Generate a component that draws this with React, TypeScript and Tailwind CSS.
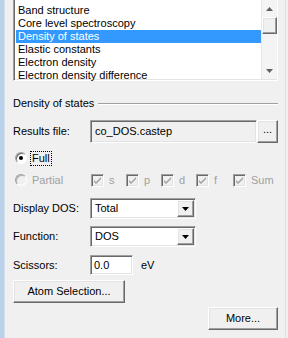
import React from 'react';

const items = [
  'Band structure',
  'Core level spectroscopy',
  'Density of states',
  'Elastic constants',
  'Electron density',
  'Electron density difference',
];

const sunken =
  'border border-t-[#a0a0a0] border-l-[#a0a0a0] border-b-white border-r-white shadow-[inset_1px_1px_0_#696969,inset_-1px_-1px_0_#e3e3e3]';
const raised =
  'border border-t-white border-l-white border-b-[#696969] border-r-[#696969] shadow-[inset_-1px_-1px_0_#a0a0a0,inset_1px_1px_0_#e3e3e3] bg-[#f0f0f0]';

function Arrow({ up, color = '#000' }: { up?: boolean; color?: string }) {
  return (
    <svg width="7" height="4" viewBox="0 0 7 4">
      <path d={up ? 'M3.5 0L7 4H0z' : 'M0 0h7L3.5 4z'} fill={color} />
    </svg>
  );
}

function DisabledCheck({ label, width }: { label: string; width: string }) {
  return (
    <div className={`flex items-center gap-[5px] text-[#a0a0a0] ${width}`}>
      <div className={`w-[13px] h-[13px] shrink-0 bg-[#f0f0f0] flex items-center justify-center ${sunken}`}>
        <svg width="7" height="7" viewBox="0 0 7 7">
          <path d="M0 3l2 2 5-5v2L2 7 0 5z" fill="#a0a0a0" />
        </svg>
      </div>
      <span>{label}</span>
    </div>
  );
}

function Combo({ value }: { value: string }) {
  return (
    <div className={`w-[106px] h-[21px] bg-white flex items-center ${sunken}`}>
      <span className="flex-1 pl-[4px]">{value}</span>
      <div className={`w-[17px] h-[17px] mr-[1px] flex items-center justify-center ${raised}`}>
        <Arrow />
      </div>
    </div>
  );
}

export default function App() {
  return (
    <div
      className="w-[288px] h-[338px] bg-[#f0f0f0] flex text-[11px] leading-[13px] text-black overflow-hidden"
      style={{ fontFamily: '"Liberation Sans", Arial, sans-serif' }}
    >
      <div className="w-[4px] bg-[#b9d1ea]" />
      <div className="w-[1px] bg-[#d5dfe9]" />
      <div className="flex-1 flex flex-col pl-[8px] pr-[7px]">
        {/* Listbox */}
        <div className="h-[81px] bg-white flex border-l border-b border-l-[#a0a0a0] border-b-white border-r border-r-white shadow-[inset_1px_0_0_#696969,inset_0_-1px_0_#e3e3e3]">
          <div className="flex-1 pt-[4px] pl-[2px]">
            {items.map((it) => (
              <div
                key={it}
                className={`h-[13px] pl-[2px] ${it === 'Density of states' ? 'bg-[#3399ff] text-white' : ''}`}
              >
                {it}
              </div>
            ))}
          </div>
          <div className="w-[16px] bg-[#f4f4f4] flex flex-col items-center border-l border-l-[#e8e8e8] mb-[1px]">
            <div className="h-[17px] flex items-center justify-center">
              <Arrow up color="#606060" />
            </div>
            <div className={`w-[15px] h-[17px] ${raised}`} />
            <div className="flex-1" />
            <div className="h-[17px] flex items-center justify-center">
              <Arrow color="#606060" />
            </div>
          </div>
        </div>

        {/* Group header */}
        <div className="mt-[16px] flex items-center gap-[4px]">
          <span>Density of states</span>
          <div className="flex-1 h-[2px] border-t border-t-[#a0a0a0] border-b border-b-white" />
        </div>

        {/* Results file */}
        <div className="mt-[10px] flex items-center">
          <span className="w-[77px]">Results file:</span>
          <div className={`flex-1 h-[23px] bg-[#f0f0f0] flex items-center pl-[4px] ${sunken}`}>co_DOS.castep</div>
          <div className={`w-[21px] h-[23px] flex items-end justify-center pb-[6px] ${raised}`}>...</div>
        </div>

        {/* Full */}
        <div className="mt-[7px] h-[16px] flex items-center pl-[2px]">
          <div className="w-[12px] h-[12px] rounded-full bg-white border border-t-[#a0a0a0] border-l-[#a0a0a0] border-b-white border-r-white shadow-[inset_1px_1px_0_#696969] flex items-center justify-center">
            <div className="w-[4px] h-[4px] rounded-full bg-black" />
          </div>
          <span className="ml-[4px] px-[1px] outline outline-1 outline-dotted outline-black">Full</span>
        </div>

        {/* Partial */}
        <div className="mt-[6px] h-[16px] flex items-center pl-[2px]">
          <div className="w-[12px] h-[12px] shrink-0 rounded-full bg-[#f0f0f0] border border-t-[#a0a0a0] border-l-[#a0a0a0] border-b-white border-r-white shadow-[inset_1px_1px_0_#b0b0b0]" />
          <span className="ml-[5px] w-[59px] text-[#a0a0a0]">Partial</span>
          <div className="flex">
            <DisabledCheck label="s" width="w-[35px]" />
            <DisabledCheck label="p" width="w-[35px]" />
            <DisabledCheck label="d" width="w-[35px]" />
            <DisabledCheck label="f" width="w-[37px]" />
            <DisabledCheck label="Sum" width="w-[40px]" />
          </div>
        </div>

        {/* Display DOS */}
        <div className="mt-[10px] flex items-center">
          <span className="w-[77px]">Display DOS:</span>
          <Combo value="Total" />
        </div>

        {/* Function */}
        <div className="mt-[7px] flex items-center">
          <span className="w-[77px]">Function:</span>
          <Combo value="DOS" />
        </div>

        {/* Scissors */}
        <div className="mt-[8px] flex items-center">
          <span className="w-[77px]">Scissors:</span>
          <div className={`w-[43px] h-[20px] bg-white flex items-center pl-[3px] ${sunken}`}>0.0</div>
          <span className="ml-[8px]">eV</span>
        </div>

        {/* Atom selection */}
        <div className="mt-[5px]">
          <div className={`w-[112px] h-[23px] flex items-center justify-center ${raised}`}>Atom Selection...</div>
        </div>

        {/* More */}
        <div className="mt-[4px] flex justify-end">
          <div className={`w-[70px] h-[23px] flex items-center justify-center ${raised}`}>More...</div>
        </div>
      </div>
      <div className="w-[1px] bg-[#e0e0e0]" />
      <div className="w-[2px]" />
    </div>
  );
}
